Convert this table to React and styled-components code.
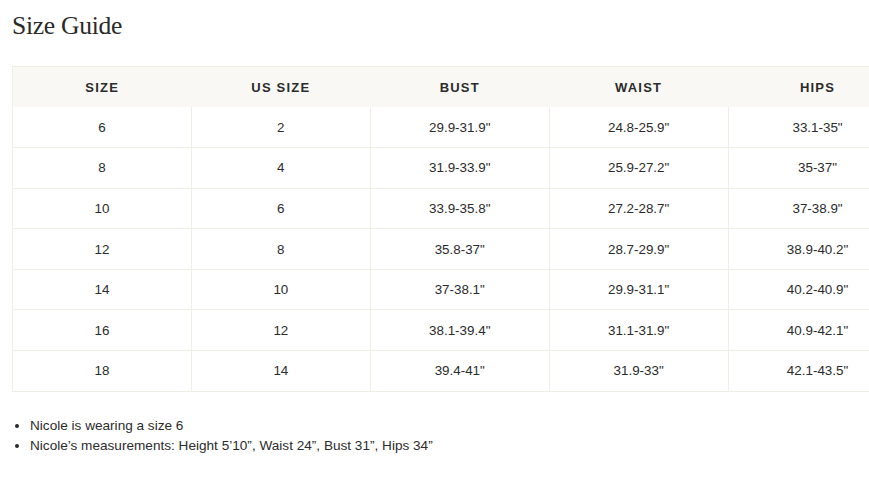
import React from 'react'
import styled, { createGlobalStyle } from 'styled-components'

const GlobalStyle = createGlobalStyle`
  html, body {
    margin: 0;
    padding: 0;
    background: #fff;
    overflow: hidden;
  }
`

const headers = ['Size', 'US Size', 'Bust', 'Waist', 'Hips']

const rows = [
  ['6', '2', '29.9-31.9"', '24.8-25.9"', '33.1-35"'],
  ['8', '4', '31.9-33.9"', '25.9-27.2"', '35-37"'],
  ['10', '6', '33.9-35.8"', '27.2-28.7"', '37-38.9"'],
  ['12', '8', '35.8-37"', '28.7-29.9"', '38.9-40.2"'],
  ['14', '10', '37-38.1"', '29.9-31.1"', '40.2-40.9"'],
  ['16', '12', '38.1-39.4"', '31.1-31.9"', '40.9-42.1"'],
  ['18', '14', '39.4-41"', '31.9-33"', '42.1-43.5"'],
]

function App() {
  return (
    <Page>
      <GlobalStyle />
      <Title>Size Guide</Title>
      <Table>
        <thead>
          <tr>
            {headers.map((h) => (
              <HeadCell key={h}>{h}</HeadCell>
            ))}
          </tr>
        </thead>
        <tbody>
          {rows.map((r) => (
            <Row key={r[0]}>
              {r.map((v, i) => (
                <Cell key={i}>{v}</Cell>
              ))}
            </Row>
          ))}
        </tbody>
      </Table>
      <Notes>
        <li>Nicole is wearing a size 6</li>
        <li>Nicole’s measurements: Height 5’10”, Waist 24”, Bust 31”, Hips 34”</li>
      </Notes>
    </Page>
  )
}

export default App

const Page = styled.div`
  padding: 12px 0 0 12px;
  font-family: 'Liberation Sans', Arial, sans-serif;
  color: #2b2b2b;
  width: 1000px;
`

const Title = styled.h1`
  margin: 0;
  font-family: 'Liberation Serif', 'Times New Roman', serif;
  font-weight: 400;
  font-size: 25.6px;
  line-height: 28px;
  letter-spacing: -0.3px;
  color: #2a2a2a;
`

const Table = styled.table`
  margin-top: 26px;
  border-collapse: collapse;
  table-layout: fixed;
  width: 895.5px;
  border-top: 1px solid #f0ede3;
  border-left: 1px solid #f0ede3;
`

const HeadCell = styled.th`
  height: 40px;
  padding: 0;
  background: #faf8f4;
  font-size: 13px;
  font-weight: 700;
  letter-spacing: 1.2px;
  text-transform: uppercase;
  color: #2b2b2b;
  text-align: center;
  vertical-align: middle;
`

const Row = styled.tr`
  height: 40.6px;
`

const Cell = styled.td`
  padding: 0;
  text-align: center;
  vertical-align: middle;
  font-size: 13.4px;
  color: #2b2b2b;
  border-right: 1px solid #f0ede3;
  border-bottom: 1px solid #f0ede3;
`

const Notes = styled.ul`
  margin: 24px 0 0;
  padding-left: 18px;
  font-size: 13.6px;
  line-height: 20px;
  color: #2b2b2b;
`
